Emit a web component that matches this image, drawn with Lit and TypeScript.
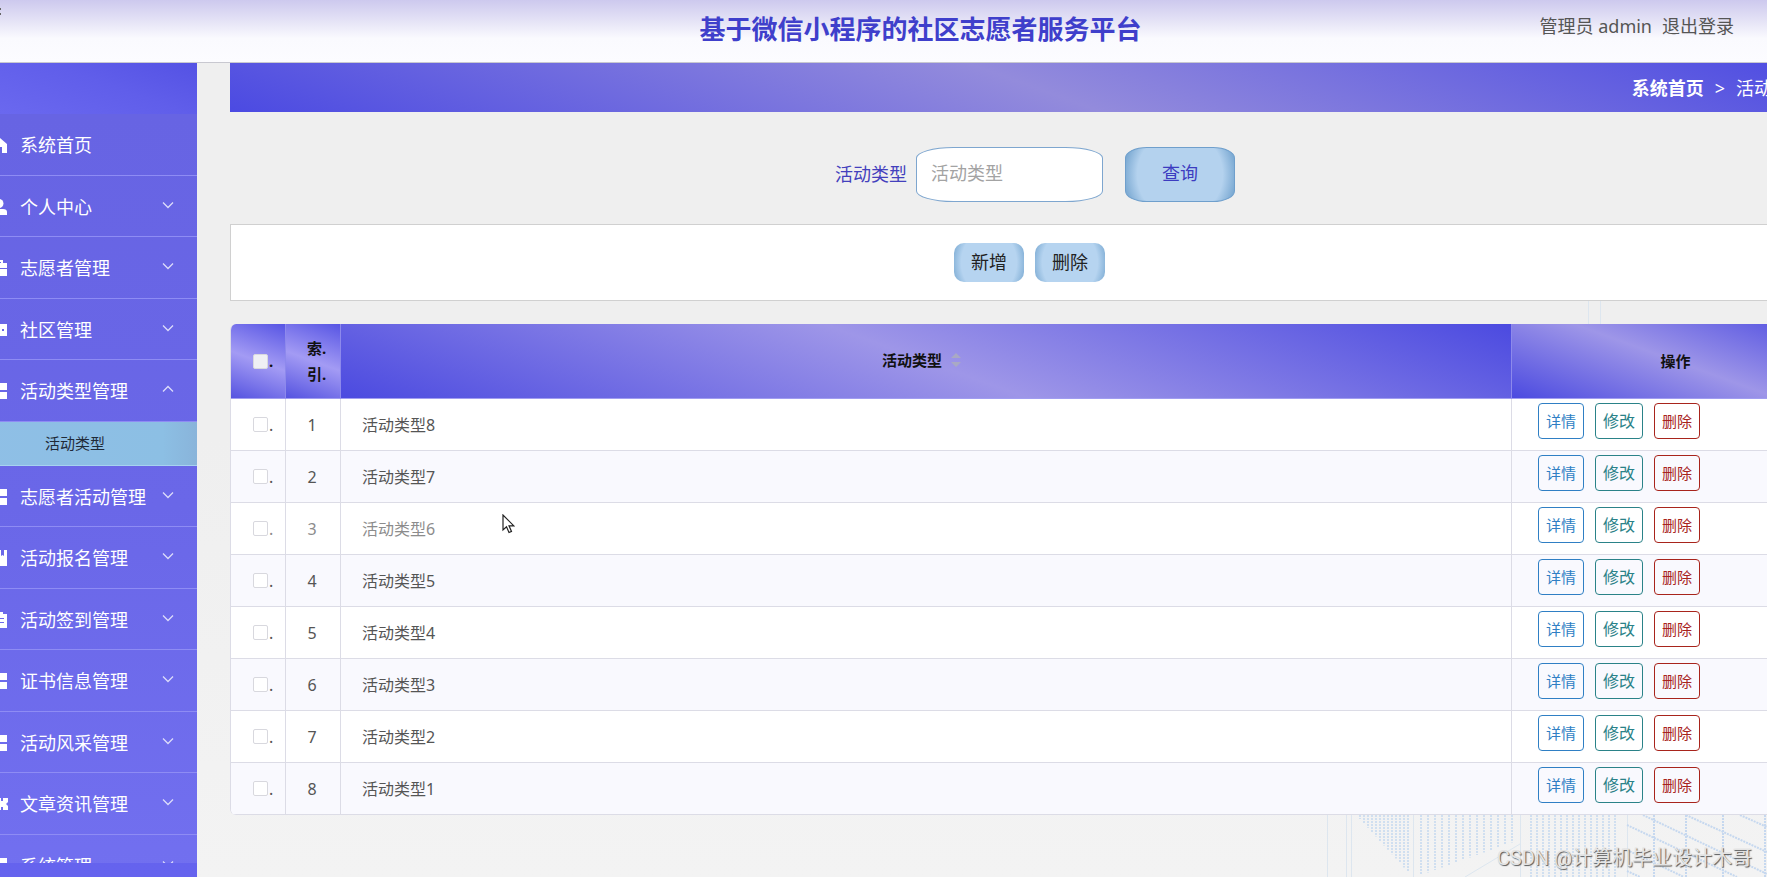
import { LitElement, html, css, svg } from "lit";
import { customElement, property } from "lit/decorators.js";

const FONT = css`"Noto Sans", "Noto Sans CJK SC", sans-serif`;

type IconName = "home" | "user" | "bag" | "screen" | "grid" | "mark" | "clip" | "ticket";

interface MenuEntry {
  label: string;
  icon: IconName;
  children?: string[];
  leaf?: boolean;
}

const MENU: MenuEntry[] = [
  { label: "系统首页", icon: "home", leaf: true },
  { label: "个人中心", icon: "user" },
  { label: "志愿者管理", icon: "bag" },
  { label: "社区管理", icon: "screen" },
  { label: "活动类型管理", icon: "grid", children: ["活动类型"] },
  { label: "志愿者活动管理", icon: "grid" },
  { label: "活动报名管理", icon: "mark" },
  { label: "活动签到管理", icon: "clip" },
  { label: "证书信息管理", icon: "grid" },
  { label: "活动风采管理", icon: "grid" },
  { label: "文章资讯管理", icon: "ticket" },
  { label: "系统管理", icon: "grid" },
];

const ICONS: Record<IconName, unknown> = {
  home: svg`<path d="M8 0L16 7V16H11V10H5V16H0V7Z"/>`,
  user: svg`<circle cx="8" cy="4.5" r="4.5"/><path d="M0 16V13Q0 10 4 10H12Q16 10 16 13V16Z"/>`,
  bag: svg`<path d="M4 3V0H12V3H16V8H0V3ZM6 3H10V2H6ZM0 9H16V16H0Z"/>`,
  screen: svg`<path fill-rule="evenodd" d="M0 2H16V14H0ZM11 7V9H13V7ZM7 7V9H9V7ZM3 7V9H5V7Z"/>`,
  grid: svg`<path d="M0 0H7V7H0ZM9 0H16V7H9ZM0 9H7V16H0ZM9 9H16V16H9Z"/>`,
  mark: svg`<path d="M0 0H10V6L11.5 5L13 6V0H16V16H0Z"/>`,
  clip: svg`<path fill-rule="evenodd" d="M0 2H4V0H12V2H16V16H0ZM4 6V7H13V6ZM4 10V11H13V10Z"/>`,
  ticket: svg`<path d="M0 2H10V5H12V2H17V6L15 8L17 10V14H12V11H10V14H0Z"/>`,
};

@customElement("side-menu")
class SideMenu extends LitElement {
  static styles = css`
    :host {
      display: flex;
      flex-direction: column;
      box-sizing: border-box;
      overflow: hidden;
      padding: 51px 0 14px;
      background:
        linear-gradient(20deg, #6c6af0, #605eea 60%, #5452e4) top / 100% 51px no-repeat,
        linear-gradient(#5c5aea, #6563ee);
      font-family: ${FONT};
    }
    .list {
      flex: 1;
      min-height: 0;
      overflow: hidden;
    }
    .items {
      display: flex;
      flex-direction: column;
      height: 782px;
      margin: 0;
      padding: 0;
      list-style: none;
      background: linear-gradient(#6764e3, #6a67e8 50%, #7270f0);
    }
    .item {
      flex: 1;
      display: flex;
      border-bottom: 1px solid #8e8cf4;
      box-sizing: border-box;
    }
    .entry {
      flex: 1;
      display: flex;
      align-items: center;
      gap: 13px;
      padding: 2px 23px 0 24px;
      border: 0;
      background: none;
      color: #fff;
      font: 18px/24px ${FONT};
      text-align: left;
      white-space: nowrap;
      cursor: pointer;
    }
    .icon {
      width: 16px;
      height: 16px;
      overflow: visible;
      fill: #fff;
      flex: none;
    }
    .label {
      flex: 1;
    }
    .arrow {
      width: 12px;
      height: 12px;
      margin-bottom: 4px;
      fill: none;
      stroke: #dcdcfa;
      stroke-width: 1.3;
    }
    .sub {
      flex: 0 0 44px;
      display: flex;
      align-items: center;
      box-sizing: border-box;
      padding-left: 78px;
      border-bottom: 1px solid #a7d3f0;
      background: linear-gradient(90deg, #8fbfe6, #8cbfe4 85%, #89b4da);
    }
    .link {
      color: #1f2a38;
      font: 15px/20px ${FONT};
      text-decoration: none;
    }
  `;

  render() {
    return html`<nav class="list" aria-label="主菜单">
      <ul class="items">
        ${MENU.map(
          (m) => html`<li class="item">
              <button class="entry" type="button">
                <svg class="icon" viewBox="0 0 16 16" aria-hidden="true">${ICONS[m.icon]}</svg>
                <span class="label">${m.label}</span>
                ${m.leaf
                  ? ""
                  : html`<svg class="arrow" viewBox="0 0 12 12" aria-hidden="true">
                      <path d=${m.children ? "M1 8.5L6 3.5L11 8.5" : "M1 3.5L6 8.5L11 3.5"} />
                    </svg>`}
              </button>
            </li>
            ${(m.children ?? []).map(
              (c) => html`<li class="sub"><a class="link" href="#">${c}</a></li>`
            )}`
        )}
      </ul>
    </nav>`;
  }
}

@customElement("type-table")
class TypeTable extends LitElement {
  @property({ attribute: false }) rows: string[] = [];

  static styles = css`
    :host {
      display: block;
      font-family: ${FONT};
    }
    .table {
      width: 100%;
      table-layout: fixed;
      border-collapse: separate;
      border-spacing: 0;
      border-left: 1px solid #dcdce6;
      border-radius: 6px;
      overflow: hidden;
      background: #fff;
    }
    .narrow {
      width: 55px;
    }
    .wide {
      width: 328px;
    }
    .head {
      height: 75px;
      box-sizing: border-box;
      padding: 0;
      border-right: 1px solid #8d89ec;
      border-bottom: 1px solid #a19df0;
      background: linear-gradient(20deg, #4b4ae0, #9e96e8, #4b4ae0);
      color: #111;
      font-size: 15px;
      font-weight: 700;
      line-height: 26px;
    }
    .small {
      background: linear-gradient(20deg, #5553e0, #a39bf4, #5755e4);
    }
    .cell {
      height: 52px;
      box-sizing: border-box;
      padding: 0;
      border-right: 1px solid #dcdce6;
      border-bottom: 1px solid #dcdce6;
      color: #555;
      font-size: 16px;
      line-height: 24px;
    }
    .row:nth-child(even) {
      background: #f9f9fe;
    }
    .row.faded .cell {
      color: #8c8c8c;
    }
    .check {
      display: flex;
      align-items: center;
      gap: 1px;
      padding-left: 22px;
    }
    .box {
      appearance: none;
      flex: none;
      width: 15px;
      height: 15px;
      margin: 0;
      border: 1px solid #d8d8de;
      border-radius: 2px;
      background: #fff;
    }
    .head .box {
      background: #efeff4;
    }
    .index {
      padding-right: 2px;
      text-align: center;
    }
    .stack {
      display: block;
      margin-left: 21px;
      text-align: left;
      white-space: nowrap;
    }
    .name {
      padding-left: 21px;
    }
    .title {
      display: inline-flex;
      align-items: center;
      gap: 9px;
      padding: 0 9px 2px 0;
    }
    .sort {
      width: 10px;
      height: 16px;
      fill: #a9a9c4;
    }
    .actions {
      display: flex;
      align-items: baseline;
      gap: 11px;
      height: 43px;
      padding-left: 26px;
    }
    .act {
      height: 36px;
      padding: 0 7px;
      box-sizing: border-box;
      border: 1px solid;
      border-radius: 4px;
      background: none;
      font: 15px/20px ${FONT};
      cursor: pointer;
    }
    .view {
      color: #2f7fc4;
    }
    .edit {
      color: #2a8288;
      font-size: 16px;
    }
    .del {
      color: #a8241c;
    }
  `;

  render() {
    return html`<table class="table">
      <colgroup>
        <col class="narrow" />
        <col class="narrow" />
        <col />
        <col class="wide" />
      </colgroup>
      <thead>
        <tr>
          <th class="head small">
            <label class="check"><input class="box" type="checkbox" aria-label="全选" />.</label>
          </th>
          <th class="head small"><span class="stack">索.</span><span class="stack">引.</span></th>
          <th class="head">
            <span class="title">活动类型
              <svg class="sort" viewBox="0 0 10 16" aria-hidden="true">
                <path d="M5 1L10 6H0ZM0 10H10L5 15Z" />
              </svg></span>
          </th>
          <th class="head">操作</th>
        </tr>
      </thead>
      <tbody>
        ${this.rows.map(
          (name, i) => html`<tr class="row ${i === 2 ? "faded" : ""}">
            <td class="cell">
              <label class="check"
                ><input class="box" type="checkbox" aria-label=${name} />.</label
              >
            </td>
            <td class="cell index">${i + 1}</td>
            <td class="cell name">${name}</td>
            <td class="cell">
              <div class="actions">
                <button class="act view" type="button">详情</button>
                <button class="act edit" type="button">修改</button>
                <button class="act del" type="button">删除</button>
              </div>
            </td>
          </tr>`
        )}
      </tbody>
    </table>`;
  }
}

const range = (n: number) => Array.from({ length: n }, (_, i) => i);

@customElement("app-root")
class AppRoot extends LitElement {
  static styles = css`
    :host {
      display: flex;
      flex-direction: column;
      position: relative;
      height: 100vh;
      overflow: hidden;
      background: linear-gradient(#efefef 50%, #f3f3f3);
      font-family: ${FONT};
    }
    .top {
      display: grid;
      grid-template-columns: 1fr auto 1fr;
      align-items: center;
      height: 63px;
      box-sizing: border-box;
      flex: none;
      padding: 0 33px 10px 107px;
      border-bottom: 1px solid #c8c8d0;
      background: linear-gradient(#cdc9ee, #e2e0f5 30%, #fafafe 62%, #fcfcff);
    }
    .brand {
      grid-column: 2;
      margin: 0;
      padding-top: 6px;
      color: #3f3fcb;
      font-size: 26px;
      font-weight: 700;
      line-height: 36px;
    }
    .account {
      display: flex;
      justify-content: flex-end;
      gap: 10px;
      color: #555;
      font-size: 18px;
      line-height: 24px;
    }
    .exit {
      color: inherit;
      text-decoration: none;
    }
    .frame {
      flex: 1;
      display: flex;
      min-height: 0;
    }
    .side {
      flex: none;
      width: 230px;
      margin-left: -33px;
    }
    .main {
      flex: 1;
      min-width: 0;
      margin-right: -73px;
      padding-left: 33px;
      z-index: 1;
    }
    .crumbs {
      display: flex;
      align-items: center;
      justify-content: flex-end;
      gap: 11px;
      height: 49px;
      padding-right: 32px;
      background: linear-gradient(20deg, #4b4ae2, #938bdc, #4b4ae2);
      color: #fff;
      font-size: 18px;
      line-height: 24px;
    }
    .home {
      color: #fff;
      font-weight: 700;
      text-decoration: none;
    }
    .search {
      display: flex;
      align-items: center;
      justify-content: center;
      margin: 35px 0 22px;
      color: #4340bd;
      font-size: 18px;
    }
    .caption {
      padding-bottom: 4px;
    }
    .field {
      width: 187px;
      height: 55px;
      box-sizing: border-box;
      margin: 0 22px 0 9px;
      padding: 0 14px 4px;
      border: 1px solid #7ea6cf;
      border-radius: 20%;
      background: #fff;
      font: 18px/24px ${FONT};
    }
    .field::placeholder {
      color: #a3a3a3;
    }
    .btn {
      height: 39px;
      width: 70px;
      padding: 0 0 2px;
      border: 0;
      border-radius: 10px;
      background: radial-gradient(ellipse 52% 110% at center, #b6d4f0 76%, #86b2d8);
      color: #222;
      font: 18px/24px ${FONT};
      cursor: pointer;
    }
    .query {
      width: 110px;
      height: 55px;
      padding-bottom: 4px;
      border: 1px solid #6f9fcc;
      border-radius: 20%;
      background: radial-gradient(ellipse 52% 110% at center, #b4d2ee 76%, #7caad3);
      color: #3c3cc0;
    }
    .panel {
      display: flex;
      justify-content: center;
      align-items: center;
      gap: 11px;
      height: 77px;
      box-sizing: border-box;
      margin-bottom: 23px;
      padding-right: 11px;
      border: 1px solid #d0d0d0;
      background: #fff;
    }
    .scene {
      position: absolute;
      right: 0;
      bottom: 0;
      width: 467px;
      height: 577px;
      fill: none;
    }
    .thin {
      stroke: #dde6ef;
    }
    .dots {
      stroke: #d0dff0;
      stroke-width: 2;
      stroke-dasharray: 2 1;
    }
    .strong {
      stroke: #c6d8ef;
      stroke-width: 2;
      stroke-dasharray: 2 1;
    }
    .mark {
      position: absolute;
      right: 15px;
      bottom: 5px;
      z-index: 2;
      color: #e4e4e4;
      font: 20px/28px Roboto, "Noto Sans CJK SC", sans-serif;
      text-shadow: 1px 1px 1px #555;
    }
    .pointer {
      position: absolute;
      left: 502px;
      top: 514px;
      z-index: 2;
      width: 13px;
      height: 20px;
    }
    .speck {
      position: absolute;
      left: 0;
      top: 8px;
      width: 1px;
      height: 8px;
      fill: #666;
    }
  `;

  private rows = range(8).map((i) => `活动类型${8 - i}`);

  render() {
    return html`
      <header class="top">
        <h1 class="brand">基于微信小程序的社区志愿者服务平台</h1>
        <div class="account"><span>管理员 admin</span><a class="exit" href="#">退出登录</a></div>
      </header>
      <svg class="scene" viewBox="0 0 467 577" aria-hidden="true">
        <path
          class="thin"
          d="M27.5 515V577M46.5 515V577M51.5 515V577M113.5 515V577M220.5 515V577M165 577L220 544M327.5 515V577M288.5 0V30M300.5 0V30"
        />
        ${range(13).map((i) => svg`<path class="dots" d="M${60 + i * 4} 515V${519 + i * 4.4}"/>`)}
        ${range(14).map((i) => svg`<path class="dots" d="M${121 + i * 7} 515V${575 - i * 2.5}"/>`)}
        ${range(15).map((i) => svg`<path class="dots" d="M${231 + i * 6} 515V577"/>`)}
        <path
          class="strong"
          d="M354 515V577M386 515V577M423 515V577M465 515V577M327 525L437 577M343 515L467 574M386 515L467 552M440 515L467 527M327 550L384 577M327 571L340 577"
        />
      </svg>
      <div class="frame">
        <side-menu class="side"></side-menu>
        <main class="main">
          <nav class="crumbs" aria-label="面包屑">
            <a class="home" href="#">系统首页</a><span>&gt;</span><span>活动类型</span>
          </nav>
          <form class="search" @submit=${(e: Event) => e.preventDefault()}>
            <label class="caption" for="kind">活动类型</label>
            <input class="field" id="kind" type="text" placeholder="活动类型" />
            <button class="btn query" type="submit">查询</button>
          </form>
          <div class="panel">
            <button class="btn" type="button">新增</button>
            <button class="btn" type="button">删除</button>
          </div>
          <type-table .rows=${this.rows}></type-table>
        </main>
      </div>
      <svg class="speck" viewBox="0 0 1 8" aria-hidden="true"><path d="M0 0H1V2H0ZM0 5H1V7H0Z" /></svg>
      <svg class="pointer" viewBox="0 0 13 20" aria-hidden="true">
        <path
          d="M1 1V16L4.5 12.8L7 18.5L9.5 17.4L7 11.8H11.8Z"
          fill="#fff"
          stroke="#222"
          stroke-width="1.2"
        />
      </svg>
      <div class="mark">CSDN @计算机毕业设计木哥</div>
    `;
  }
}
